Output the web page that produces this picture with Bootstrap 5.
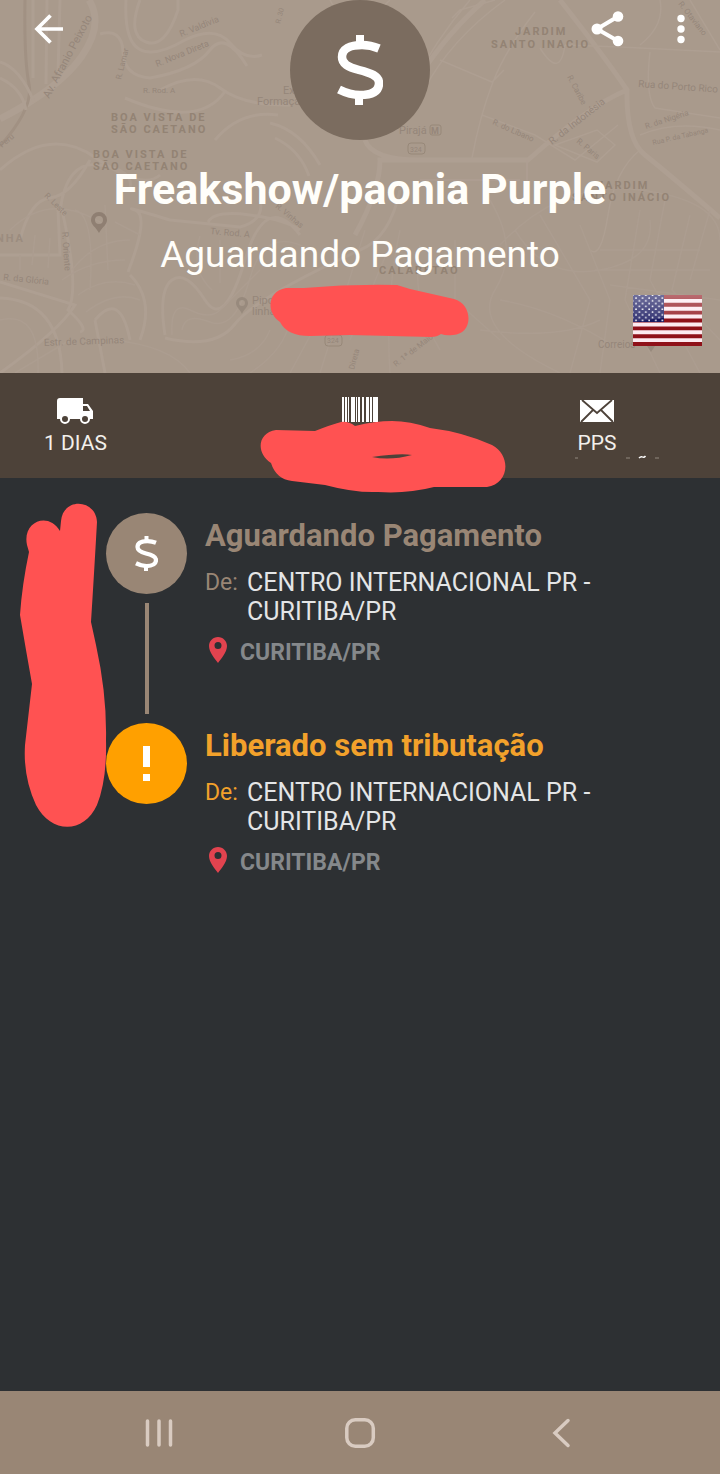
<!DOCTYPE html>
<html lang="pt-BR">
<head>
<meta charset="utf-8">
<meta name="viewport" content="width=device-width, initial-scale=1">
<title>Rastreamento</title>
<link href="https://cdn.jsdelivr.net/npm/bootstrap@5.3.0/dist/css/bootstrap.min.css" rel="stylesheet">
<style>
  body { font-family: Roboto, "Noto Sans", sans-serif; background: #2d3033; color: #e4e5e6; }
  svg { display: block; flex: none; }
  .hero { background: #a99a8c; color: #fffefa; }
  .map { position: absolute; inset: 0; width: 100%; height: 100%; }
  .topbar { position: absolute; inset: 0 0 auto 0; height: 58px; padding: 0 22px 0 29px; }
  .topbar-actions { gap: 30px; }
  .icon-btn { background: none; border: 0; padding: 0; }
  .hero-badge { width: 140px; height: 140px; background: #7b6c5f; }
  .hero-title { font-size: 43px; line-height: 50px; margin-top: 24px; }
  .hero-status { font-size: 37px; line-height: 46px; margin-top: 18px; }
  .hero-mask { margin-top: 6px; margin-bottom: 33px; }
  .flag { position: absolute; right: 18px; bottom: 27px; }
  .stats { background: #4d4239; height: 105px; font-size: 21px; line-height: 24px; color: #f3f0ec; }
  .stat-days { padding-left: 44px; }
  .stat-type { padding-right: 57px; }
  .stat-icon { height: 32px; margin-top: 22px; margin-bottom: 4px; }
  .code-mask { position: absolute; top: 46px; left: 50%; transform: translateX(-50%); z-index: 2; }
  .timeline { padding: 35px 18px 35px 106px; }
  .dates-mask { position: absolute; left: 18px; top: 24px; }
  .step { gap: 18px; }
  .dot { width: 81px; height: 81px; background: var(--tone); }
  .rail { width: 4px; height: 111px; margin: 9px 0; background: var(--tone); }
  .tone-wait { --tone: #998675; }
  .tone-ok { --tone: #ffa000; --label: #f2a12b; }
  .step-title, .step-from { color: var(--label, var(--tone)); }
  .step-title { font-size: 31px; line-height: 46px; margin-bottom: 9px; }
  .step-from { font-size: 23px; line-height: 29px; width: 42px; flex: none; }
  .step-office { font-size: 25px; line-height: 29px; max-width: 360px; }
  .step-place { font-size: 23px; line-height: 32px; gap: 12px; margin-top: 11px; padding-left: 3px; color: #85888b; }
  .sysnav { background: #998675; height: 83px; padding: 0 58px; }
</style>
</head>
<body class="min-vh-100 d-flex flex-column">

<svg width="0" height="0" class="position-absolute" aria-hidden="true">
  <symbol id="money" viewBox="0 0 46 70">
    <path d="M42 13.500C36 11 31 10 25 10C13 10 5 14 5 22C5 29 11 32 22 35C34 38 42 41 42 48C42 57 34 60 23 60C15 60 9 58 2 54.500" fill="none" stroke="#fff" stroke-width="8.500"/>
    <path d="M19 0h8v11h-8zM18 59h8v11h-8z" fill="#fff"/>
  </symbol>
  <symbol id="pin" viewBox="0 0 18 26">
    <path fill-rule="evenodd" fill="#e2434f" d="M9 0C4 0 0 4 0 9c0 6 6 13 9 17 3-4 9-11 9-17 0-5-4-9-9-9zm0 5a3.500 3.500 0 1 1 0 7a3.500 3.500 0 0 1 0-7z"/>
  </symbol>
</svg>

<header class="hero position-relative overflow-hidden d-flex flex-column align-items-center">
  <svg class="map" viewBox="0 0 720 373" preserveAspectRatio="xMidYMid slice" aria-hidden="true">
    <g fill="none" stroke="#ae9f92" stroke-width="1.500">
      <path stroke-width="7" d="M0 119Q60 88 82 56T89 0"/>
      <path stroke-width="3" stroke="#a19183" d="M25 0Q24 60 29 84T0 146"/>
      <path stroke-width="3" d="M126 0Q124 40 139 49T185 40Q215 25 230 43T262 55M140 0Q127 35 146 42T178 10V0M100 34Q122 28 123 52T150 78Q195 70 210 50T247 66M33 0V78M47 0L46 84M60 0L58 74M0 62Q20 68 34 102M0 78Q22 88 26 110M160 90Q196 70 220 88T290 105M125 98Q200 130 226 90M0 170Q50 125 96 158T160 175M215 140Q240 110 278 115M270 123Q300 130 320 165M275 138Q300 150 309 176"/>
      <path stroke-width="5" d="M355 235Q380 190 380 160H528Q590 105 627 90M420 75Q450 30 485 0M560 0Q607 60 627 90Q626 140 645 155T720 218M365 140Q372 160 420 160"/>
      <path d="M410 90Q435 40 470 0M424 90Q450 40 505 0M472 158Q480 115 493 82T535 12M440 60L492 82L504 70M482 115L535 135L575 160L618 125M565 45L620 47L720 52M650 52Q645 95 655 108L720 118M640 135Q675 120 720 130M640 150Q615 170 608 215T590 250M690 0L720 50M660 0Q665 25 640 45M555 145L597 130L615 145L597 162ZM527 160V200M420 180H520M330 0Q350 40 390 0M540 48Q560 80 565 45M452 18L460 10L495 0"/>
      <path stroke-width="3" d="M20 240Q30 200 50 198T90 160M60 212Q66 160 100 165T130 188M62 210Q80 290 68 310Q90 330 80 332M128 272Q150 215 135 210T170 220L240 227Q265 220 260 200M208 222Q215 210 250 215T300 230M0 373Q60 330 75 305L0 282M0 255H60L58 210M140 340Q155 300 130 275M165 335Q158 290 172 280T205 300T245 260T300 235M165 338Q215 350 235 324T360 250Q390 238 400 190M0 298Q60 300 62 373M95 320L105 373M95 320Q120 290 130 340"/>
      <path stroke="#ac9d90" d="M10 230Q50 190 105 225M20 255V270M35 235L32 265M50 238L48 268M62 280Q90 260 125 260M72 270Q95 240 130 240M78 295Q105 275 135 285M86 312Q115 290 140 300M75 210Q95 215 90 290M105 205L108 270M115 222L140 235M172 335Q170 300 190 310T220 310T260 270M182 330Q185 312 210 322T250 278T310 250M220 240V283M200 236Q190 270 212 290M270 330Q260 355 230 360M290 320Q285 350 250 373M310 336L290 373M0 320Q40 310 38 373M15 373L70 340M110 340Q170 345 190 373M365 230L320 373M388 250L350 340M400 230Q385 300 390 373M420 245Q410 300 440 350M455 240V300L500 340M490 200Q520 250 495 290T560 373M500 245Q560 180 640 190T720 240M515 230Q545 280 600 270T650 220M540 215L590 300L570 373M580 225L610 300L600 373M640 210L625 300L660 373M665 200L650 280L700 373M690 215L672 290L720 340M710 210L690 280M600 250H700M595 270H710M610 285L720 300M500 300Q560 310 620 350M480 330Q560 340 600 320"/>
    </g>
    <g fill="#938374" font-size="11" font-weight="700" letter-spacing="2">
      <text x="111" y="121">BOA VISTA DE</text><text x="111" y="133">SÃO CAETANO</text>
      <text x="93" y="158">BOA VISTA DE</text><text x="93" y="170">SÃO CAETANO</text>
      <text x="515" y="35">JARDIM</text><text x="491" y="48">SANTO INACIO</text>
      <text x="597" y="189">JARDIM</text><text x="572" y="201">SANTO INÁCIO</text>
      <text x="-4" y="242" fill="#9b8c7f">NHA</text><text x="379" y="274">CALABETAO</text>
    </g>
    <g fill="#95867a" font-size="10">
      <text transform="translate(49 99) rotate(-62)" font-size="11">Av. Afranio Peixoto</text>
      <text x="283" y="94" font-size="11">Ex</text><text x="257" y="105" font-size="11">Formação</text><text x="399" y="134" font-size="11">Pirajá</text>
      <text transform="translate(181 37) rotate(-22)" font-size="9">R. Valdivia</text>
      <text transform="translate(157 67) rotate(-22)" font-size="9">R. Nova Direta</text>
      <text transform="translate(121 80) rotate(-76)" font-size="8">R. Lamar</text>
      <text x="143" y="93" font-size="8">R. Rod. A</text>
      <text transform="translate(552 145) rotate(-38)">R. da Indonésia</text>
      <text transform="translate(638 87) rotate(4)">Rua do Porto Rico</text>
      <text transform="translate(567 77) rotate(62)" font-size="8">R. Caribe</text>
      <text transform="translate(492 124) rotate(24)" font-size="8">R. do Líbano</text>
      <text transform="translate(576 142) rotate(40)" font-size="8">R. Paris</text>
      <text transform="translate(646 129) rotate(-18)" font-size="8">R. da Nigéria</text>
      <text transform="translate(653 145) rotate(-13)" font-size="7">Rua P. da Tabanga</text>
      <text transform="translate(678 4) rotate(52)" font-size="8">R. Otaviano</text>
      <text transform="translate(280 24) rotate(-75)" font-size="7">R. 30</text>
      <text transform="translate(44 196) rotate(45)" font-size="8">R. Leste</text>
      <text transform="translate(62 232) rotate(86)" font-size="9">R. Oriente</text>
      <text transform="translate(3 280) rotate(6)" font-size="9">R. da Glória</text>
      <text transform="translate(210 234) rotate(5)" font-size="9">Tv. Rod. A</text>
      <text transform="translate(275 207) rotate(40)" font-size="8">R. Vinhas</text>
      <text transform="translate(44 346) rotate(-2)">Estr. de Campinas</text>
      <text x="252" y="304" font-size="11">Pipo</text><text x="252" y="315" font-size="11">linha</text>
      <text transform="translate(396 367) rotate(-38)" font-size="8">R. 1ª de Maio</text>
      <text transform="translate(354 370) rotate(-75)" font-size="8">Direta</text>
      <text x="598" y="348">Correios</text>
      <text x="410" y="152" font-size="7">324</text><text x="327" y="343" font-size="7">324</text>
      <text x="431" y="134" font-size="9" font-weight="700">M</text>
      <text transform="translate(2 148) rotate(-40)" font-size="8">Peru</text>
    </g>
    <g fill="none" stroke="#978879">
      <rect x="430" y="125" width="11" height="10" rx="2"/><rect x="408" y="143" width="17" height="11" rx="3"/><rect x="325" y="335" width="17" height="11" rx="3"/>
    </g>
    <g fill="#8f7f72" fill-rule="evenodd">
      <path d="M99 212a8 8 0 0 0-8 8c0 5 5 7 8 13c3-6 8-8 8-13a8 8 0 0 0-8-8zm0 4a4 4 0 1 1 0 8a4 4 0 0 1 0-8z"/>
      <path fill="#988a7d" d="M242 297a6 6 0 0 0-6 6c0 4 4 6 6 11c2-5 6-7 6-11a6 6 0 0 0-6-6zm0 3a3 3 0 1 1 0 6a3 3 0 0 1 0-6zM651 340l-4 6l4 6l4-6z"/>
    </g>
  </svg>

  <div class="topbar d-flex align-items-center justify-content-between">
    <button class="icon-btn" type="button" aria-label="Voltar">
      <svg width="40" height="40" viewBox="0 0 40 40" fill="none" stroke="#fff" stroke-width="3.700"><path d="M34 20H9M21.500 6.500L8 20L21.500 33.500"/></svg>
    </button>
    <div class="topbar-actions d-flex align-items-center">
      <button class="icon-btn" type="button" aria-label="Compartilhar">
        <svg width="60" height="40" viewBox="0 0 60 40" fill="#fff"><path d="M44 7.500L23 20L44 32" fill="none" stroke="#fff" stroke-width="4"/><circle cx="44" cy="7.500" r="5.300"/><circle cx="23" cy="20" r="5.500"/><circle cx="44" cy="32" r="5.300"/></svg>
      </button>
      <button class="icon-btn" type="button" aria-label="Mais opções">
        <svg width="34" height="40" viewBox="0 0 34 40" fill="#fff"><circle cx="17" cy="9.500" r="3.700"/><circle cx="17" cy="20" r="3.700"/><circle cx="17" cy="30.500" r="3.700"/></svg>
      </button>
    </div>
  </div>

  <div class="hero-badge rounded-circle position-relative d-flex align-items-center justify-content-center">
    <svg width="46" height="70" aria-hidden="true"><use href="#money"/></svg>
  </div>
  <h1 class="hero-title fw-bold mb-0 position-relative text-center">Freakshow/paonia Purple</h1>
  <p class="hero-status mb-0 position-relative text-center">Aguardando Pagamento</p>
  <svg class="hero-mask position-relative" width="220" height="56" viewBox="250 284 220 56" aria-hidden="true">
    <path fill="#ff5252" d="M286 288L304 288Q350 284 397 285L410 289L454 299C473 304 474 334 453 335Q446 336 441 334Q437 337 431 337L350 335L310 336Q287 336 280 322C266 313 267 291 286 288Z"/>
  </svg>
  <svg class="flag" width="69" height="51" viewBox="0 0 69 51" role="img" aria-label="Estados Unidos">
    <defs>
      <linearGradient id="gloss" x2="0" y2="1"><stop offset="0" stop-color="#fff" stop-opacity=".38"/><stop offset="1" stop-color="#fff" stop-opacity=".12"/></linearGradient>
      <pattern id="stars" width="6.600" height="5.600" patternUnits="userSpaceOnUse" x="1" y="1"><circle cx="2" cy="2" r=".9" fill="#fff"/><circle cx="5.300" cy="4.800" r=".9" fill="#fff"/></pattern>
    </defs>
    <path fill="#fdeaf0" d="M0 0h69v51H0z"/>
    <path stroke="#8f1119" stroke-width="3.923" d="M0 1.960h69M0 9.800h69M0 17.650h69M0 25.500h69M0 33.350h69M0 41.200h69M0 49.040h69"/>
    <path fill="#17175f" d="M0 0h31v27H0z"/><path fill="url(#stars)" d="M0 0h31v27H0z"/>
    <path fill="url(#gloss)" d="M0 0h69v20Q40 21 0 27z"/>
  </svg>
</header>

<section class="stats position-relative d-flex justify-content-between">
  <div class="stat-days d-flex flex-column align-items-center">
    <div class="stat-icon d-flex align-items-center">
      <svg width="36" height="26" viewBox="0 0 36 26" aria-hidden="true"><path fill="#fff" fill-rule="evenodd" d="M3 0h23v6h5l5 7v8h-3a5 5 0 0 1-10 0H13a5 5 0 0 1-10 0H0V3Q0 0 3 0zM26 8v5h7l-3-5zM8 18a3 3 0 1 0 0 6a3 3 0 0 0 0-6zM28 18a3 3 0 1 0 0 6a3 3 0 0 0 0-6z"/></svg>
    </div>
    <span>1 DIAS</span>
  </div>
  <div class="position-absolute start-50 translate-middle-x">
    <div class="stat-icon">
      <svg width="36" height="27" viewBox="0 0 36 27" fill="#fff" aria-hidden="true"><path d="M0 2h2v25H0zM3 2h2v25H3zM6 2h1v25H6zM9 2h4v25H9zM14 2h1v25h-1zM16 2h2v25h-2zM20 2h2v25h-2zM24 2h3v25h-3zM28 2h2v25h-2zM31 2h5v25h-5z"/></svg>
    </div>
  </div>
  <div class="stat-type d-flex flex-column align-items-center">
    <div class="stat-icon d-flex align-items-center">
      <svg width="36" height="24" viewBox="0 0 36 24" aria-hidden="true"><path fill="#fff" d="M1 1h34v22H1z"/><path d="M3 1L18 14L33 1M2 23L14 11M34 23L22 11" fill="none" stroke="#4d4239" stroke-width="1.800"/></svg>
    </div>
    <span>PPS</span>
    <svg width="132" height="8" viewBox="531 455 132 8" aria-hidden="true"><path d="M575 458h3M626 458h4M655 458h4" stroke="#91877f"/><path d="M639 458q2-2 3.500-1t3-1" fill="none" stroke="#fff" stroke-width="1.500"/></svg>
  </div>
  <svg class="code-mask" width="292" height="76" viewBox="214 419 292 76" aria-hidden="true">
    <path fill="#ff5252" fill-rule="evenodd" d="M276 430L315 431Q330 425 341 422Q348 421 355 426Q375 421 392 421Q410 421 430 428Q463 432 492 445C512 456 509 484 487 487L434 487Q407 494 378 492Q355 493 325 485L292 481Q276 479 271 463C256 453 257 433 276 430ZM372 457Q390 461 412 455Q400 453 372 457Z"/>
  </svg>
</section>

<main class="timeline position-relative flex-grow-1">
  <ol class="list-unstyled mb-0">
    <li class="step d-flex tone-wait">
      <div class="d-flex flex-column align-items-center flex-shrink-0">
        <div class="dot rounded-circle d-flex align-items-center justify-content-center"><svg width="23" height="35" aria-hidden="true"><use href="#money"/></svg></div>
        <div class="rail"></div>
      </div>
      <div>
        <h2 class="step-title fw-bold">Aguardando Pagamento</h2>
        <div class="d-flex"><span class="step-from">De:</span><span class="step-office">CENTRO INTERNACIONAL PR - CURITIBA/PR</span></div>
        <div class="step-place d-flex fw-bold"><svg width="20" height="26" aria-hidden="true"><use href="#pin"/></svg>CURITIBA/PR</div>
      </div>
    </li>
    <li class="step d-flex tone-ok">
      <div class="flex-shrink-0">
        <div class="dot rounded-circle d-flex align-items-center justify-content-center"><svg width="7" height="35" viewBox="0 0 7 35" aria-hidden="true"><path fill="#fff" d="M0 0h7v21H0zM0 28h7v7H0z"/></svg></div>
      </div>
      <div>
        <h2 class="step-title fw-bold">Liberado sem tributação</h2>
        <div class="d-flex"><span class="step-from">De:</span><span class="step-office">CENTRO INTERNACIONAL PR - CURITIBA/PR</span></div>
        <div class="step-place d-flex fw-bold"><svg width="20" height="26" aria-hidden="true"><use href="#pin"/></svg>CURITIBA/PR</div>
      </div>
    </li>
  </ol>
  <svg class="dates-mask" width="90" height="328" viewBox="18 502 90 328" aria-hidden="true">
    <path fill="#ff5252" d="M27 545C22 522 48 511 60 531L61 521C63 497 96 499 97 522Q94 575 91 622L96 645Q107 695 106 740Q107 780 97 805C84 834 51 834 36 805Q23 777 25 745L32 684L26 650L20 615Q22 585 29 552Z"/>
  </svg>
</main>

<nav class="sysnav row g-0 align-items-center" aria-label="Sistema">
  <div class="col d-flex justify-content-center"><button class="icon-btn" type="button" aria-label="Recentes">
    <svg width="32" height="32" viewBox="0 0 32 32" fill="none" stroke="#d9cbc1" stroke-width="3.500" stroke-linecap="round"><path d="M4.500 4v24M16 4v24M27.500 4v24"/></svg></button></div>
  <div class="col d-flex justify-content-center"><button class="icon-btn" type="button" aria-label="Início">
    <svg width="32" height="32" viewBox="0 0 32 32" fill="none" stroke="#d9cbc1" stroke-width="3.500"><rect x="2.800" y="2.800" width="26.500" height="26.500" rx="8.500"/></svg></button></div>
  <div class="col d-flex justify-content-center"><button class="icon-btn" type="button" aria-label="Voltar">
    <svg width="32" height="32" viewBox="0 0 32 32" fill="none" stroke="#d9cbc1" stroke-width="3.500" stroke-linecap="round"><path d="M23 3.500L10 16L23 28.500"/></svg></button></div>
</nav>

<script src="https://cdn.jsdelivr.net/npm/bootstrap@5.3.0/dist/js/bootstrap.bundle.min.js"></script>
</body>
</html>
